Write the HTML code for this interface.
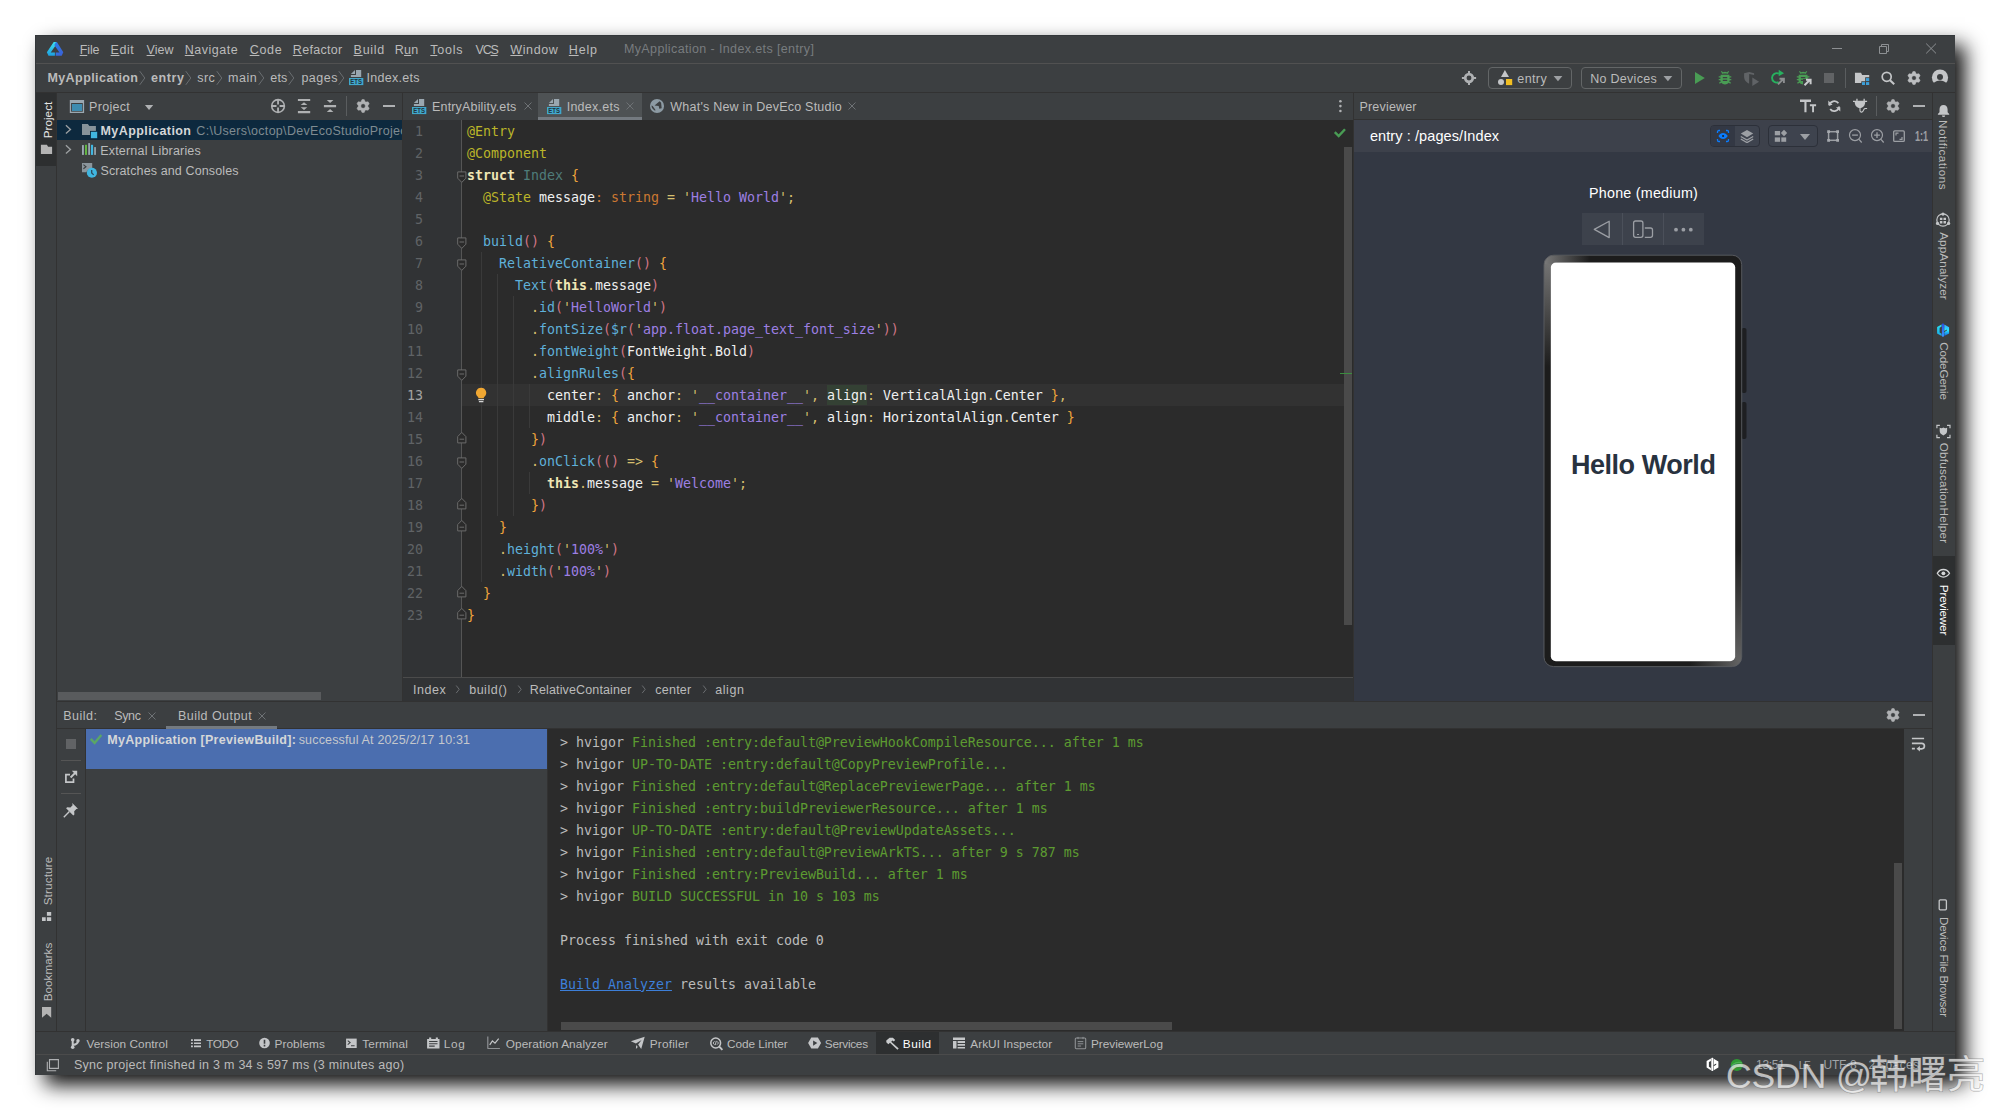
<!DOCTYPE html><html><head><meta charset="utf-8"><title>MyApplication - Index.ets [entry]</title><style>
html,body{margin:0;padding:0;}
body{width:1990px;height:1110px;background:#fff;position:relative;overflow:hidden;font-family:"Liberation Sans",sans-serif;font-size:13px;color:#bbb;}
div,span,svg,pre{position:absolute;white-space:pre;margin:0;}
b{font-weight:bold}

pre{font-family:"DejaVu Sans Mono","Liberation Mono",monospace;font-size:13.29px;height:22px;line-height:22px;color:#f0f0f0;}
pre i{font-style:normal}
.a{color:#bbb529}.k{color:#efe6b5;font-weight:bold}.t{color:#4f7c7a}.o{color:#f0a53c}.w{color:#f0f0f0}
.s{color:#9d7fe3}.y{color:#d6bf6e}.f{color:#5fb0da}.p{color:#d17686}.c{color:#cc7832}
.g{color:#5d9b31}.l{color:#bbbbbb}.u{color:#3d7fd9;text-decoration:underline}
.n{color:#606366;text-align:right;width:30px}
</style></head><body>
<div style="left:35px;top:35px;width:1920px;height:1040px;background:#3c3f41;box-shadow:10px 10px 19px rgba(0,0,0,.94);"></div>
<div style="left:35px;top:35px;width:1920px;height:1px;background:#33373a;"></div>
<div style="left:35px;top:63px;width:1920px;height:1px;background:#515151;"></div>
<div style="left:35px;top:92px;width:1920px;height:1px;background:#323232;"></div>
<div style="left:35px;top:93px;width:21px;height:939px;background:#3c3f41;"></div>
<div style="left:56px;top:93px;width:1px;height:939px;background:#323232;"></div>
<div style="left:35px;top:93px;width:21px;height:73px;background:#2d2f30;"></div>
<div style="left:402px;top:93px;width:1px;height:609px;background:#323232;"></div>
<div style="left:1353px;top:93px;width:1px;height:609px;background:#323232;"></div>
<div style="left:1932px;top:93px;width:1px;height:939px;background:#323232;"></div>
<div style="left:1933px;top:556px;width:22px;height:89px;background:#2d2f30;"></div>
<div style="left:57px;top:120px;width:345px;height:20px;background:#0d293e;"></div>
<div style="left:58px;top:692px;width:263px;height:8px;background:#595b5d;"></div>
<div style="left:403px;top:93px;width:950px;height:27px;background:#3c3f41;"></div>
<div style="left:538px;top:93px;width:104px;height:27px;background:#4e5254;"></div>
<div style="left:538px;top:117px;width:104px;height:3px;background:#747a80;"></div>
<div style="left:403px;top:120px;width:950px;height:557px;background:#2b2b2b;"></div>
<div style="left:403px;top:120px;width:58px;height:557px;background:#313335;"></div>
<div style="left:461px;top:120px;width:1px;height:557px;background:#555555;"></div>
<div style="left:462px;top:384px;width:882px;height:22px;background:#323232;"></div>
<div style="left:403px;top:677px;width:950px;height:1px;background:#4b4b4b;"></div>
<div style="left:403px;top:678px;width:950px;height:23px;background:#313335;"></div>
<div style="left:1344px;top:147px;width:8px;height:478px;background:#4a4a4a;"></div>
<div style="left:1340px;top:373px;width:12px;height:1px;background:#3b8d3f;"></div>
<div style="left:1354px;top:93px;width:578px;height:26px;background:#3c3f41;"></div>
<div style="left:1354px;top:119px;width:578px;height:1px;background:#323232;"></div>
<div style="left:1354px;top:120px;width:578px;height:32px;background:#3d414b;"></div>
<div style="left:1354px;top:152px;width:578px;height:549px;background:#333843;"></div>
<div style="left:57px;top:701px;width:1875px;height:1px;background:#323232;"></div>
<div style="left:57px;top:702px;width:1875px;height:27px;background:#3c3f41;"></div>
<div style="left:57px;top:728px;width:1875px;height:1px;background:#323232;"></div>
<div style="left:166px;top:726px;width:111px;height:3px;background:#747a80;"></div>
<div style="left:85px;top:729px;width:1px;height:303px;background:#323232;"></div>
<div style="left:86px;top:729px;width:461px;height:40px;background:#4b6eaf;"></div>
<div style="left:547px;top:729px;width:1px;height:303px;background:#323232;"></div>
<div style="left:548px;top:729px;width:1356px;height:303px;background:#2b2b2b;"></div>
<div style="left:1904px;top:729px;width:28px;height:303px;background:#3c3f41;"></div>
<div style="left:561px;top:1022px;width:611px;height:8px;background:#4a4a4a;"></div>
<div style="left:1894px;top:863px;width:8px;height:166px;background:#4a4a4a;"></div>
<div style="left:61px;top:760px;width:20px;height:1px;background:#555555;"></div>
<div style="left:61px;top:793px;width:20px;height:1px;background:#555555;"></div>
<div style="left:35px;top:1031px;width:1920px;height:1px;background:#323232;"></div>
<div style="left:35px;top:1032px;width:1920px;height:22px;background:#3c3f41;"></div>
<div style="left:876px;top:1032px;width:63px;height:22px;background:#2d2f30;"></div>
<div style="left:35px;top:1054px;width:1920px;height:1px;background:#4b4b4b;"></div>
<div style="left:35px;top:1055px;width:1920px;height:20px;background:#3c3f41;"></div>
<div style="left:35px;top:35px;width:1px;height:1040px;background:#33373a;"></div>
<svg style="left:1540px;top:250px;" width="212" height="424" viewBox="0 0 212 424">
<defs>
<linearGradient id="pgv" x1="0" y1="0" x2="0" y2="1"><stop offset="0" stop-color="#7a7a7a"/><stop offset="1" stop-color="#1c1c1c"/></linearGradient>
<linearGradient id="pgh" x1="0" y1="0" x2="1" y2="0"><stop offset="0" stop-color="#7a7a7a"/><stop offset="1" stop-color="#1c1c1c"/></linearGradient>
<linearGradient id="pgv2" x1="0" y1="0" x2="0" y2="1"><stop offset="0" stop-color="#1c1c1c"/><stop offset="1" stop-color="#666666"/></linearGradient>
<linearGradient id="pgh2" x1="0" y1="0" x2="1" y2="0"><stop offset="0" stop-color="#1c1c1c"/><stop offset="1" stop-color="#666666"/></linearGradient>
<clipPath id="ring"><path clip-rule="evenodd" d="M13.5 5.200h178.700a9.500 9.500 0 0 1 9.500 9.500v392.400a9.500 9.500 0 0 1-9.500 9.500H13.500a9.500 9.500 0 0 1-9.500-9.500V14.700a9.500 9.500 0 0 1 9.500-9.500zM15.800 12.500a5 5 0 0 0-5 5v388.800a5 5 0 0 0 5 5h174.400a5 5 0 0 0 5-5V17.500a5 5 0 0 0-5-5z"/></clipPath>
</defs>
<rect x="201.500" y="78" width="5" height="65" rx="2" fill="#1e1f22"/>
<rect x="201.500" y="152" width="5" height="37" rx="2" fill="#1e1f22"/>
<rect x="4" y="5.200" width="197.700" height="411.400" rx="9.500" fill="#1c1c1c"/>
<g clip-path="url(#ring)">
<rect x="4" y="5" width="8" height="112" fill="url(#pgv)"/>
<rect x="4" y="5" width="46" height="9" fill="url(#pgh)"/>
<rect x="194" y="300" width="8" height="117" fill="url(#pgv2)"/>
<rect x="150" y="410" width="52" height="7" fill="url(#pgh2)"/>
</g>
<rect x="4" y="5.200" width="197.700" height="411.400" rx="9.500" fill="none" stroke="#5b5e62" stroke-width=".9"/>
<rect x="10.800" y="12.500" width="184.400" height="398.800" rx="5" fill="#ffffff"/>
</svg>
<div style="left:1582px;top:213px;width:122px;height:32px;background:#3d424c;"></div>
<div style="left:1622px;top:213px;width:1px;height:32px;background:#4b505a;"></div>
<div style="left:1663px;top:213px;width:1px;height:32px;background:#4b505a;"></div>
<svg style="left:1582px;top:213px;" width="122" height="32" viewBox="0 0 122 32">
<path d="M27.200 8.300V24.600L12.300 16.400z" fill="none" stroke="#9b9ea4" stroke-width="1.300" stroke-linejoin="round"/>
<rect x="51.600" y="8" width="9.300" height="16.300" rx="2" fill="none" stroke="#9b9ea4" stroke-width="1.300"/>
<path d="M55 21.500h2" stroke="#9b9ea4" stroke-width="1"/>
<path d="M62.800 15h5.700a2 2 0 0 1 2 2v5.300a2 2 0 0 1-2 2h-5.700" fill="none" stroke="#9b9ea4" stroke-width="1.300"/>
<circle cx="94" cy="16.700" r="1.900" fill="#9b9ea4"/><circle cx="101.400" cy="16.700" r="1.900" fill="#9b9ea4"/><circle cx="108.800" cy="16.700" r="1.900" fill="#9b9ea4"/>
</svg>
<svg style="left:46px;top:41px;" width="19" height="16" viewBox="0 0 19 16">
<defs><linearGradient id="lg1" x1="0" y1="0" x2="0" y2="1"><stop offset="0" stop-color="#3fe0ee"/><stop offset="1" stop-color="#1c9fe0"/></linearGradient>
<linearGradient id="lg2" x1="0" y1="0" x2="1" y2="1"><stop offset="0" stop-color="#2b7fe8"/><stop offset="1" stop-color="#3b5fd6"/></linearGradient></defs>
<path d="M7.700 1H10.900L9.100 5.300L4.700 11.600H8.900V14.700H2.500L.850 11.300Z" fill="url(#lg1)"/>
<path d="M10.900 1L17.300 11.300L15.700 14.700H9.700V11.600H13.500L9.100 5.300L8.300 4L10 1Z" fill="url(#lg2)"/>
</svg>
<svg style="left:1826px;top:40px;" width="120" height="18" viewBox="0 0 120 18">
<path d="M6 8.500h10" stroke="#8d9093" stroke-width="1"/>
<path d="M53.500 6.500h7v7h-7zM55.500 6.500v-2h7v7h-2" fill="none" stroke="#8d9093" stroke-width="1"/>
<path d="M100.200 3.600l9.800 9.800M110 3.600l-9.800 9.800" stroke="#8d9093" stroke-width="1"/>
</svg>
<svg style="left:138.8px;top:70px;" width="8" height="16" viewBox="0 0 8 16"><path d="M.800 1.200L5.800 8L.800 14.800" fill="none" stroke="#6a6e71" stroke-width="1"/></svg>
<svg style="left:184.8px;top:70px;" width="8" height="16" viewBox="0 0 8 16"><path d="M.800 1.200L5.800 8L.800 14.800" fill="none" stroke="#6a6e71" stroke-width="1"/></svg>
<svg style="left:215.5px;top:70px;" width="8" height="16" viewBox="0 0 8 16"><path d="M.800 1.200L5.800 8L.800 14.800" fill="none" stroke="#6a6e71" stroke-width="1"/></svg>
<svg style="left:257.5px;top:70px;" width="8" height="16" viewBox="0 0 8 16"><path d="M.800 1.200L5.800 8L.800 14.800" fill="none" stroke="#6a6e71" stroke-width="1"/></svg>
<svg style="left:288.3px;top:70px;" width="8" height="16" viewBox="0 0 8 16"><path d="M.800 1.200L5.800 8L.800 14.800" fill="none" stroke="#6a6e71" stroke-width="1"/></svg>
<svg style="left:338px;top:70px;" width="8" height="16" viewBox="0 0 8 16"><path d="M.800 1.200L5.800 8L.800 14.800" fill="none" stroke="#6a6e71" stroke-width="1"/></svg>
<svg style="left:348px;top:69px;" width="17" height="18" viewBox="0 0 17 18">
<path d="M2.900 5L7 .900V5zM8 .900h5.200V8H2.900V6H8z" fill="#9aa7b0"/>
<rect x="1" y="9" width="14.300" height="7.100" fill="#40a8cc"/>
<text x="8.150" y="15.300" font-family="Liberation Sans,sans-serif" font-weight="bold" font-size="6.800" text-anchor="middle" fill="#22313a" textLength="11.600" lengthAdjust="spacingAndGlyphs">ETS</text>
</svg>
<svg style="left:410.9px;top:98px;" width="17" height="18" viewBox="0 0 17 18">
<path d="M2.900 5L7 .900V5zM8 .900h5.200V8H2.900V6H8z" fill="#9aa7b0"/>
<rect x="1" y="9" width="14.300" height="7.100" fill="#40a8cc"/>
<text x="8.150" y="15.300" font-family="Liberation Sans,sans-serif" font-weight="bold" font-size="6.800" text-anchor="middle" fill="#22313a" textLength="11.600" lengthAdjust="spacingAndGlyphs">ETS</text>
</svg>
<svg style="left:545.9px;top:98px;" width="17" height="18" viewBox="0 0 17 18">
<path d="M2.900 5L7 .900V5zM8 .900h5.200V8H2.900V6H8z" fill="#9aa7b0"/>
<rect x="1" y="9" width="14.300" height="7.100" fill="#40a8cc"/>
<text x="8.150" y="15.300" font-family="Liberation Sans,sans-serif" font-weight="bold" font-size="6.800" text-anchor="middle" fill="#22313a" textLength="11.600" lengthAdjust="spacingAndGlyphs">ETS</text>
</svg>
<svg style="left:1460px;top:69px;" width="18" height="18" viewBox="0 0 18 18">
<circle cx="9" cy="9" r="3.800" fill="none" stroke="#afb1b3" stroke-width="2.700"/>
<path d="M9 1.900v3M9 13.100v3M1.900 9h3M13.100 9h3" stroke="#afb1b3" stroke-width="2"/>
</svg>
<div style="left:1488px;top:67px;width:84px;height:22px;border:1px solid #636667;border-radius:4px;box-sizing:border-box"></div>
<div style="left:1581px;top:67px;width:101px;height:22px;border:1px solid #636667;border-radius:4px;box-sizing:border-box"></div>
<svg style="left:1496px;top:68px;" width="20" height="20" viewBox="0 0 20 20">
<path d="M8.900 2L13 9H5z" fill="#c4c6c8"/><circle cx="5" cy="14.100" r="3" fill="#c4c6c8"/><rect x="10" y="11" width="6.200" height="6.100" fill="#f2bf22"/>
</svg>
<svg style="left:1552px;top:74px;" width="12" height="9" viewBox="0 0 12 9"><path d="M1.600 1.900h8.800L6 7.200z" fill="#9da0a3"/></svg>
<svg style="left:1662px;top:74px;" width="12" height="9" viewBox="0 0 12 9"><path d="M1.500 1.900h8.800L5.900 7.200z" fill="#9da0a3"/></svg>
<svg style="left:1692px;top:69px;" width="16" height="18" viewBox="0 0 16 18"><path d="M3 3.100L12.800 9.100L3 15.100z" fill="#499c54"/></svg>
<svg style="left:1716px;top:69px;" width="18" height="18" viewBox="0 0 18 18"><path d="M5.6 4.600a4.100 4.100 0 0 1 6.800 0zM4.6 5.800h8.800v1.400h1.900v1.300h-1.700v1.500h1.700v1.300h-1.700c0 .5-.1 1-.3 1.400l1.700 .9-.6 1.100-1.800-.9c-.9 1.100-2.200 1.600-3.600 1.600s-2.700-.5-3.600-1.600l-1.800 .9-.6-1.100 1.700-.9c-.2-.4-.3-.9-.3-1.400h-1.700v-1.300h1.700v-1.500h-1.700v-1.300h1.900z" fill="#499c54"/>
<path d="M5.3 2.300l1.800 2M12.7 2.300l-1.800 2" stroke="#499c54" stroke-width="1.200"/>
<path d="M6.8 8.600h4.400M6.8 11.300h4.400" stroke="#3c3f41" stroke-width="1.300"/></svg>
<svg style="left:1742px;top:69px;" width="20" height="19" viewBox="0 0 20 19">
<path d="M2.100 4.300L7.200 3.100l4.900 1.200v1.600l-4.900-1-.100 9.900C4.300 13.400 2.100 11 2.100 8z" fill="#606366"/>
<path d="M10.300 8.500L17.100 12.800L10.300 17z" fill="#606366"/>
</svg>
<svg style="left:1767px;top:68px;" width="20" height="19" viewBox="0 0 20 19">
<path d="M11.900 5.700A4.700 4.700 0 1 0 11.600 14.200" fill="none" stroke="#27b15f" stroke-width="1.900"/>
<path d="M11.700 1.700L17 5.300L11.700 8.300z" fill="#27b15f"/>
<path d="M11 16.300l4.800-4.800M12.500 10.700h4.400v4.400" fill="none" stroke="#8c8e90" stroke-width="1.900"/>
</svg>
<svg style="left:1794px;top:69px;" width="20" height="19" viewBox="0 0 20 19"><path d="M5.7 4.600a4.100 4.100 0 0 1 6.800 0zM4.7 5.800h8.800v1.400h1.900v1.300h-1.700v1.500h1.700v1.300h-1.700c0 .5-.1 1-.3 1.400l1.700 .9-.6 1.100-1.800-.9c-.9 1.100-2.200 1.600-3.600 1.600s-2.700-.5-3.600-1.600l-1.800 .9-.6-1.100 1.700-.9c-.2-.4-.3-.9-.3-1.400h-1.700v-1.300h1.700v-1.500h-1.700v-1.300h1.900z" fill="#499c54"/>
<path d="M5.4 2.300l1.800 2M12.8 2.300l-1.800 2" stroke="#499c54" stroke-width="1.200"/>
<path d="M6.9 8.600h4.400M6.9 11.300h4.400" stroke="#3c3f41" stroke-width="1.300"/>
<path d="M9 10h10v9H9z" fill="#3c3f41"/>
<path d="M10.500 16.300l5-5M12 10.700h4.600v4.600" fill="none" stroke="#c9cbcd" stroke-width="2"/>
</svg>
<div style="left:1824px;top:73px;width:10.3px;height:10px;background:#616365;"></div>
<div style="left:1845px;top:68px;width:1px;height:20px;background:#5a5d5f;"></div>
<svg style="left:1853px;top:71px;" width="18" height="16" viewBox="0 0 18 16">
<path d="M1.950 1.850h6.100l1.100 2.200h7.050v2.200h-4v4h-3.900v1.800H1.950z" fill="#c4c6c8"/>
<rect x="13" y="7.100" width="3.200" height="3" fill="#3d9fd8"/><rect x="9" y="11.100" width="3" height="2.900" fill="#3d9fd8"/><rect x="13" y="11.100" width="3.200" height="2.900" fill="#3d9fd8"/>
</svg>
<svg style="left:1879px;top:69px;" width="18" height="18" viewBox="0 0 18 18">
<circle cx="7.700" cy="7.800" r="4.500" fill="none" stroke="#c4c6c8" stroke-width="1.700"/>
<path d="M11 11.200l4.200 4.100" stroke="#c4c6c8" stroke-width="2.100"/>
</svg>
<svg style="left:1905px;top:69px;" width="18" height="18" viewBox="0 0 18 18"><path fill-rule="evenodd" fill="#bcbec0" stroke="#bcbec0" stroke-width=".5" stroke-linejoin="round" d="M6.93 4.72L7.90 2.59L10.10 2.59L11.07 4.72L11.67 5.07L14.00 4.84L15.10 6.75L13.74 8.65L13.74 9.35L15.10 11.25L14.00 13.16L11.67 12.93L11.07 13.28L10.10 15.41L7.90 15.41L6.93 13.28L6.33 12.93L4.00 13.16L2.90 11.25L4.26 9.35L4.26 8.65L2.90 6.75L4.00 4.84L6.33 5.07ZM6.70 9.00a2.3 2.3 0 1 0 4.6 0a2.3 2.3 0 1 0 -4.6 0Z"/></svg>
<svg style="left:1930px;top:68px;" width="20" height="20" viewBox="0 0 20 20">
<defs><clipPath id="avc"><circle cx="10" cy="9.500" r="8.100"/></clipPath></defs>
<circle cx="10" cy="9.500" r="8.100" fill="#c4c6c8"/>
<circle cx="10" cy="9" r="3" fill="#3c3f41"/>
<ellipse cx="10" cy="18.600" rx="7.750" ry="6" fill="#3c3f41"/>
</svg>
<svg style="left:68px;top:98px;" width="18" height="17" viewBox="0 0 18 17">
<rect x="1.800" y="2" width="14.300" height="13" fill="#9aa7b0"/>
<rect x="3.100" y="5" width="11.700" height="8.700" fill="#3c3f41"/>
<rect x="4" y="6" width="10.100" height="7" fill="#3e8cb0"/>
</svg>
<svg style="left:143px;top:103px;" width="12" height="9" viewBox="0 0 12 9"><path d="M1.900 2h8.300L6.050 7z" fill="#afb1b3"/></svg>
<svg style="left:269px;top:97px;" width="18" height="18" viewBox="0 0 18 18">
<circle cx="9.050" cy="9" r="6.350" fill="none" stroke="#afb1b3" stroke-width="1.600"/>
<path d="M9.050 2.500v4.900M9.050 10.600v4.900M2.600 9h4.900M10.600 9h4.900" stroke="#afb1b3" stroke-width="1.800"/>
</svg>
<svg style="left:296px;top:97px;" width="16" height="18" viewBox="0 0 16 18">
<path d="M1.900 1.900h12.300v2.200H1.900zM1.900 14h12.300v2.200H1.900zM8 5.300l3.300 2.800H4.700zM8 13l3.300-2.800H4.700z" fill="#afb1b3"/>
</svg>
<svg style="left:322px;top:97px;" width="16" height="18" viewBox="0 0 16 18">
<path d="M1.900 7.950h12.200v2.250H1.900zM8.100 6l3.300-3H4.800zM8.100 12.100l3.300 3H4.800z" fill="#afb1b3"/>
</svg>
<div style="left:346px;top:96px;width:1px;height:20px;background:#5a5d5f;"></div>
<svg style="left:354px;top:97px;" width="18" height="18" viewBox="0 0 18 18"><path fill-rule="evenodd" fill="#afb1b3" stroke="#afb1b3" stroke-width=".5" stroke-linejoin="round" d="M7.03 4.72L8.00 2.59L10.20 2.59L11.17 4.72L11.77 5.07L14.10 4.84L15.20 6.75L13.84 8.65L13.84 9.35L15.20 11.25L14.10 13.16L11.77 12.93L11.17 13.28L10.20 15.41L8.00 15.41L7.03 13.28L6.43 12.93L4.10 13.16L3.00 11.25L4.36 9.35L4.36 8.65L3.00 6.75L4.10 4.84L6.43 5.07ZM6.80 9.00a2.3 2.3 0 1 0 4.6 0a2.3 2.3 0 1 0 -4.6 0Z"/></svg>
<div style="left:383px;top:104.8px;width:12.2px;height:2.4px;background:#afb1b3;"></div>
<svg style="left:39px;top:143px;" width="15" height="13" viewBox="0 0 15 13"><path d="M1.900 1.800h6l1.200 2h4V11H1.900z" fill="#b4b4b4"/></svg>
<svg style="left:63px;top:123px;" width="10" height="14" viewBox="0 0 10 14"><path d="M2.900 2.200L7.500 6.400L2.900 10.600" fill="none" stroke="#9da0a2" stroke-width="1.300"/></svg>
<svg style="left:63px;top:143px;" width="10" height="14" viewBox="0 0 10 14"><path d="M2.900 2.200L7.500 6.400L2.900 10.600" fill="none" stroke="#9da0a2" stroke-width="1.300"/></svg>
<svg style="left:80px;top:122px;" width="19" height="18" viewBox="0 0 19 18">
<path d="M2 2h5.900l1.500 2H15.900v9H2z" fill="#87939a"/>
<rect x="10" y="8.900" width="8.200" height="8.200" fill="#0d293e"/>
<rect x="10.900" y="9.800" width="6.300" height="6.400" fill="#40b6e0"/>
</svg>
<svg style="left:80px;top:141px;" width="18" height="16" viewBox="0 0 18 16">
<rect x="2" y="4.100" width="1.900" height="9.800" fill="#9aa7b0"/><rect x="5" y="3.800" width="2" height="10.100" fill="#62b543"/>
<rect x="8.200" y="2.100" width="1.900" height="11.800" fill="#9aa7b0"/><rect x="11" y="3.800" width="2.100" height="10.100" fill="#40b6e0"/>
<rect x="14.200" y="6.100" width="1.700" height="7.800" fill="#9aa7b0"/>
</svg>
<svg style="left:80px;top:161px;" width="19" height="19" viewBox="0 0 19 19">
<path d="M2 2h10.200v6.500H8.500L6.200 11.200H2z" fill="#8a959c"/>
<path d="M3.400 3.600l2.600 2.100-2.600 2.100" fill="none" stroke="#3c3f41" stroke-width="1.100"/>
<circle cx="11.900" cy="11.750" r="5.100" fill="#40b6e0"/>
<path d="M11.700 8.900v3.100l2 1.900" fill="none" stroke="#2b4a5c" stroke-width="1.300"/>
</svg>
<svg style="left:522.5px;top:101.2px;" width="10" height="10" viewBox="0 0 10 10"><path d="M1.500 1.500l7 7M8.500 1.500l-7 7" stroke="#6e7275" stroke-width="1"/></svg>
<svg style="left:625.2px;top:101.2px;" width="10" height="10" viewBox="0 0 10 10"><path d="M1.500 1.500l7 7M8.500 1.500l-7 7" stroke="#6e7275" stroke-width="1"/></svg>
<svg style="left:847px;top:101.2px;" width="10" height="10" viewBox="0 0 10 10"><path d="M1.500 1.500l7 7M8.500 1.500l-7 7" stroke="#6e7275" stroke-width="1"/></svg>
<svg style="left:146.5px;top:711.3px;" width="10" height="10" viewBox="0 0 10 10"><path d="M1.500 1.500l7 7M8.500 1.500l-7 7" stroke="#6e7275" stroke-width="1"/></svg>
<svg style="left:257.3px;top:711.3px;" width="10" height="10" viewBox="0 0 10 10"><path d="M1.500 1.500l7 7M8.500 1.500l-7 7" stroke="#6e7275" stroke-width="1"/></svg>
<svg style="left:649px;top:98px;" width="17" height="17" viewBox="0 0 17 17">
<circle cx="8.020" cy="8.050" r="7.050" fill="#8c9aa3"/>
<path d="M10.600 3.200L12.100 4.700L12.700 10.200L10.300 10.800L9.700 8.100L5.500 7.500L7.300 5.900L9.100 4.400zM2.400 7.400L3.700 8.100L6.700 12.300L5.500 12.600L3 9.900z" fill="#3c3f41"/>
</svg>
<svg style="left:1336px;top:98px;" width="8" height="16" viewBox="0 0 8 16"><circle cx="4.400" cy="3.200" r="1.300" fill="#afb1b3"/><circle cx="4.400" cy="8.100" r="1.300" fill="#afb1b3"/><circle cx="4.400" cy="13" r="1.300" fill="#afb1b3"/></svg>
<svg style="left:455.3px;top:684px;" width="6" height="11" viewBox="0 0 6 11"><path d="M1.200 1.500L4.200 5.300L1.200 9.100" fill="none" stroke="#6a6d70" stroke-width="1"/></svg>
<svg style="left:516.6px;top:684px;" width="6" height="11" viewBox="0 0 6 11"><path d="M1.200 1.500L4.200 5.300L1.200 9.100" fill="none" stroke="#6a6d70" stroke-width="1"/></svg>
<svg style="left:641px;top:684px;" width="6" height="11" viewBox="0 0 6 11"><path d="M1.200 1.500L4.200 5.300L1.200 9.100" fill="none" stroke="#6a6d70" stroke-width="1"/></svg>
<svg style="left:701.5px;top:684px;" width="6" height="11" viewBox="0 0 6 11"><path d="M1.200 1.500L4.200 5.300L1.200 9.100" fill="none" stroke="#6a6d70" stroke-width="1"/></svg>
<svg style="left:456px;top:171px;" width="11" height="13" viewBox="0 0 11 13"><path d="M1.700 .900h8.200v6.300L5.800 11.400L1.700 7.200z" fill="#2b2b2b" stroke="#6c6c6c" stroke-width="1"/><path d="M3.500 5h4.600" stroke="#6c6c6c" stroke-width="1"/></svg>
<svg style="left:456px;top:237px;" width="11" height="13" viewBox="0 0 11 13"><path d="M1.700 .900h8.200v6.300L5.800 11.400L1.700 7.200z" fill="#2b2b2b" stroke="#6c6c6c" stroke-width="1"/><path d="M3.500 5h4.600" stroke="#6c6c6c" stroke-width="1"/></svg>
<svg style="left:456px;top:259px;" width="11" height="13" viewBox="0 0 11 13"><path d="M1.700 .900h8.200v6.300L5.800 11.400L1.700 7.200z" fill="#2b2b2b" stroke="#6c6c6c" stroke-width="1"/><path d="M3.500 5h4.600" stroke="#6c6c6c" stroke-width="1"/></svg>
<svg style="left:456px;top:369px;" width="11" height="13" viewBox="0 0 11 13"><path d="M1.700 .900h8.200v6.300L5.800 11.400L1.700 7.200z" fill="#2b2b2b" stroke="#6c6c6c" stroke-width="1"/><path d="M3.500 5h4.600" stroke="#6c6c6c" stroke-width="1"/></svg>
<svg style="left:456px;top:457px;" width="11" height="13" viewBox="0 0 11 13"><path d="M1.700 .900h8.200v6.300L5.800 11.400L1.700 7.200z" fill="#2b2b2b" stroke="#6c6c6c" stroke-width="1"/><path d="M3.500 5h4.600" stroke="#6c6c6c" stroke-width="1"/></svg>
<svg style="left:456px;top:431px;" width="11" height="13" viewBox="0 0 11 13"><path d="M1.700 11.900h8.200V5.600L5.800 1.400L1.700 5.600z" fill="#2b2b2b" stroke="#6c6c6c" stroke-width="1"/><path d="M3.500 8.200h4.600" stroke="#6c6c6c" stroke-width="1"/></svg>
<svg style="left:456px;top:497px;" width="11" height="13" viewBox="0 0 11 13"><path d="M1.700 11.900h8.200V5.600L5.800 1.400L1.700 5.600z" fill="#2b2b2b" stroke="#6c6c6c" stroke-width="1"/><path d="M3.500 8.200h4.600" stroke="#6c6c6c" stroke-width="1"/></svg>
<svg style="left:456px;top:519px;" width="11" height="13" viewBox="0 0 11 13"><path d="M1.700 11.900h8.200V5.600L5.800 1.400L1.700 5.600z" fill="#2b2b2b" stroke="#6c6c6c" stroke-width="1"/><path d="M3.500 8.200h4.600" stroke="#6c6c6c" stroke-width="1"/></svg>
<svg style="left:456px;top:585px;" width="11" height="13" viewBox="0 0 11 13"><path d="M1.700 11.900h8.200V5.600L5.800 1.400L1.700 5.600z" fill="#2b2b2b" stroke="#6c6c6c" stroke-width="1"/><path d="M3.500 8.200h4.600" stroke="#6c6c6c" stroke-width="1"/></svg>
<svg style="left:456px;top:607px;" width="11" height="13" viewBox="0 0 11 13"><path d="M1.700 11.900h8.200V5.600L5.800 1.400L1.700 5.600z" fill="#2b2b2b" stroke="#6c6c6c" stroke-width="1"/><path d="M3.500 8.200h4.600" stroke="#6c6c6c" stroke-width="1"/></svg>
<svg style="left:1332px;top:126px;" width="16" height="14" viewBox="0 0 16 14"><path d="M2.800 6.200l3.900 3.900 6.300-6.900" fill="none" stroke="#499c54" stroke-width="2.400"/></svg>
<svg style="left:1798px;top:97px;" width="20" height="18" viewBox="0 0 20 18"><path d="M2 2.400h11v2.500H8.500v10.400H6.400V4.900H2zM11.900 7.200h6.200v2H16v6.100h-1.900V9.200h-2.200z" fill="#c4c6c8"/></svg>
<svg style="left:1826px;top:97px;" width="17" height="18" viewBox="0 0 17 18">
<path d="M3.500 8.800A4.900 4.900 0 0 1 12.400 6.300M13.100 9.500A4.900 4.900 0 0 1 4.200 12" fill="none" stroke="#c4c6c8" stroke-width="1.800"/>
<path d="M2.300 3.600v4.300h4.300zM14.300 14.500v-4.300H10z" fill="#c4c6c8"/>
</svg>
<svg style="left:1852px;top:97px;" width="17" height="18" viewBox="0 0 17 18"><path d="M1 3.800h14.100v1.300H1zM4.300 1.800h1.300v2.200H4.300zM11.500 1.800h1.300v2.200h-1.300zM2.700 5h10.500c0 3.300-2.100 6.100-5.200 6.100S2.700 8.300 2.700 5z" fill="#c4c6c8"/>
<path d="M8 11v2.500c0 1.900 2.300 2.200 3.100 .6l.9-1.800c.3-.6 .7-.8 1.300-.8h1.800" fill="none" stroke="#c4c6c8" stroke-width="1.100"/></svg>
<div style="left:1876px;top:96px;width:1px;height:20px;background:#5a5d5f;"></div>
<svg style="left:1884px;top:97px;" width="18" height="18" viewBox="0 0 18 18"><path fill-rule="evenodd" fill="#afb1b3" stroke="#afb1b3" stroke-width=".5" stroke-linejoin="round" d="M6.93 4.72L7.90 2.59L10.10 2.59L11.07 4.72L11.67 5.07L14.00 4.84L15.10 6.75L13.74 8.65L13.74 9.35L15.10 11.25L14.00 13.16L11.67 12.93L11.07 13.28L10.10 15.41L7.90 15.41L6.93 13.28L6.33 12.93L4.00 13.16L2.90 11.25L4.26 9.35L4.26 8.65L2.90 6.75L4.00 4.84L6.33 5.07ZM6.70 9.00a2.3 2.3 0 1 0 4.6 0a2.3 2.3 0 1 0 -4.6 0Z"/></svg>
<div style="left:1912.9px;top:104.8px;width:12.3px;height:2.4px;background:#afb1b3;"></div>
<div style="left:1710px;top:125px;width:50px;height:22px;border:1px solid #2c3039;border-radius:4px;box-sizing:border-box;background:#3e434e;overflow:hidden"><div style="left:0;top:0;width:24px;height:20px;background:#333844"></div></div>
<div style="left:1768px;top:125px;width:50px;height:22px;border:1px solid #2c3039;border-radius:4px;box-sizing:border-box;background:#3e434e"></div>
<svg style="left:1716px;top:129px;" width="14" height="14" viewBox="0 0 14 14">
<path d="M1.500 4V2.800a1.300 1.300 0 0 1 1.300-1.300H4M10 1.500h1.200a1.300 1.300 0 0 1 1.300 1.300V4M12.500 10v1.200a1.300 1.300 0 0 1-1.300 1.300H10M4 12.500H2.800a1.300 1.300 0 0 1-1.300-1.300V10" fill="none" stroke="#0a7cff" stroke-width="1.300"/>
<path d="M2.400 7c1.200-2 2.900-3 4.700-3s3.500 1 4.700 3c-1.200 2-2.900 3-4.700 3s-3.500-1-4.700-3z" fill="#0a7cff"/><circle cx="7.100" cy="7" r="1.100" fill="#1e2530"/>
</svg>
<svg style="left:1740px;top:129px;" width="14" height="14" viewBox="0 0 14 14">
<path d="M7 1l6.200 3.600L7 8.200.800 4.600z" fill="#9c9fa4"/>
<path d="M.800 7.500L7 11.100l6.200-3.600M.800 10L7 13.600l6.200-3.600" fill="none" stroke="#9c9fa4" stroke-width="1.300"/>
</svg>
<svg style="left:1774px;top:129px;" width="14" height="14" viewBox="0 0 14 14">
<rect x=".800" y="2" width="5.300" height="4.300" fill="#9c9fa4"/><rect x=".800" y="8.400" width="5.300" height="4.400" fill="#9c9fa4"/><rect x="7.300" y="8.400" width="4.900" height="4.400" fill="#9c9fa4"/>
<path d="M10 .800l3.200 3.200L10 7.200 6.800 4z" fill="#9c9fa4"/>
</svg>
<svg style="left:1799px;top:132px;" width="12" height="10" viewBox="0 0 12 10"><path d="M1 1.900h10L6 8z" fill="#9c9fa4"/></svg>
<svg style="left:1826px;top:129px;" width="15" height="14" viewBox="0 0 15 14">
<rect x="2.600" y="2.700" width="9" height="8.600" fill="none" stroke="#9c9fa4" stroke-width="1.500"/>
<path d="M1.200 1.300h2.800v2.800H1.200zM10.200 1.300h2.800v2.800h-2.800zM1.200 9.900h2.800v2.800H1.200zM10.200 9.900h2.800v2.800h-2.800z" fill="#a6a9ae"/>
</svg>
<svg style="left:1848px;top:128px;" width="15" height="16" viewBox="0 0 15 16"><circle cx="7" cy="7.100" r="5.500" fill="none" stroke="#9c9fa4" stroke-width="1.200"/><path d="M11 11.300l2.700 3.200" stroke="#9c9fa4" stroke-width="1.200"/><path d="M4.100 7.100h5.800" stroke="#9c9fa4" stroke-width="1.300"/></svg>
<svg style="left:1869.7px;top:128px;" width="15" height="16" viewBox="0 0 15 16"><circle cx="7" cy="7.100" r="5.500" fill="none" stroke="#9c9fa4" stroke-width="1.200"/><path d="M11 11.300l2.700 3.200" stroke="#9c9fa4" stroke-width="1.200"/><path d="M4.100 7.100h5.800M7 4.200v5.800" stroke="#9c9fa4" stroke-width="1.300"/></svg>
<svg style="left:1892px;top:129px;" width="14" height="14" viewBox="0 0 14 14">
<rect x="1.700" y="1.900" width="10.600" height="10.500" rx="1" fill="none" stroke="#9c9fa4" stroke-width="1.300"/>
<path d="M4 6.500V4.200h2.500M10 8v2.300H7.500" fill="none" stroke="#9c9fa4" stroke-width="1.200"/>
</svg>
<svg style="left:1884px;top:706px;" width="18" height="18" viewBox="0 0 18 18"><path fill-rule="evenodd" fill="#afb1b3" stroke="#afb1b3" stroke-width=".5" stroke-linejoin="round" d="M6.93 4.72L7.90 2.59L10.10 2.59L11.07 4.72L11.67 5.07L14.00 4.84L15.10 6.75L13.74 8.65L13.74 9.35L15.10 11.25L14.00 13.16L11.67 12.93L11.07 13.28L10.10 15.41L7.90 15.41L6.93 13.28L6.33 12.93L4.00 13.16L2.90 11.25L4.26 9.35L4.26 8.65L2.90 6.75L4.00 4.84L6.33 5.07ZM6.70 9.00a2.3 2.3 0 1 0 4.6 0a2.3 2.3 0 1 0 -4.6 0Z"/></svg>
<div style="left:1912.9px;top:713.7px;width:12.2px;height:2.5px;background:#afb1b3;"></div>
<svg style="left:1910px;top:736px;" width="17" height="17" viewBox="0 0 17 17">
<path d="M1.900 2.500h12.200M1.900 7.400h9.800a2.700 2.700 0 0 1 0 5.400h-2.900M1.900 12.700h3" fill="none" stroke="#c4c6c8" stroke-width="1.700"/>
<path d="M9.900 10l-3.400 2.800 3.400 2.800z" fill="#c4c6c8"/>
</svg>
<div style="left:65.9px;top:739px;width:10.2px;height:10px;background:#616365;"></div>
<svg style="left:63px;top:769px;" width="16" height="16" viewBox="0 0 16 16">
<path d="M7 5.600H2.900v7.600h7.600V9.400" fill="none" stroke="#c4c6c8" stroke-width="1.700"/>
<path d="M7.600 8.500l5.600-5.600" stroke="#c4c6c8" stroke-width="1.900"/><path d="M8.800 1.800h5.400v5.400z" fill="#c4c6c8"/>
</svg>
<svg style="left:62px;top:801px;" width="18" height="18" viewBox="0 0 18 18">
<path d="M10.200 1.900l5.800 5.800-1.600 .3-2.200 2.200 .2 3.200-1.100 1.100L4.100 7.300l1.100-1.100 3.200 .2 2.200-2.200z" fill="#c4c6c8"/>
<path d="M7.400 10.600L1.800 16.200" stroke="#c4c6c8" stroke-width="1.400"/>
</svg>
<svg style="left:89px;top:733px;" width="15" height="13" viewBox="0 0 15 13"><path d="M1.700 5.900l3.900 4 6.700-8" fill="none" stroke="#5aa765" stroke-width="2.400"/></svg>
<svg style="left:1936px;top:103px;" width="15" height="15" viewBox="0 0 15 15">
<path d="M7.500 1.900c2.600 0 4.100 2 4.100 4.600v2.700l1.600 1.700v.9H1.900v-.9l1.600-1.700V6.500c0-2.600 1.400-4.600 4-4.600zM5.900 12.600h3.300a1.650 1.500 0 0 1-3.300 0z" fill="#c4c6c8"/>
</svg>
<svg style="left:1935px;top:212px;" width="17" height="16" viewBox="0 0 17 16">
<circle cx="8" cy="8" r="6.200" fill="none" stroke="#c4c6c8" stroke-width="1.200"/>
<circle cx="8" cy="2.100" r="1.600" fill="#c4c6c8"/><circle cx="2.500" cy="11.400" r="1.600" fill="#c4c6c8"/><circle cx="13.600" cy="11.400" r="1.600" fill="#c4c6c8"/>
<path d="M4.900 5.700h2.500V8H4.900zM8.500 5.700H11V8H8.500zM4.900 9.100h2.500v2.300H4.900zM8.500 9.100H11v2.300H8.500z" fill="#c4c6c8"/>
</svg>
<svg style="left:1936px;top:322px;" width="15" height="16" viewBox="0 0 15 16"><defs><linearGradient id="cga" x1="0" y1="0" x2="0" y2="1"><stop offset="0" stop-color="#29e4f2"/><stop offset="1" stop-color="#18a6e6"/></linearGradient>
<linearGradient id="cgb" x1="0" y1="0" x2="0" y2="1"><stop offset="0" stop-color="#2a4fe0"/><stop offset="1" stop-color="#3b93ff"/></linearGradient>
<linearGradient id="cgc" x1="0" y1="0" x2="0" y2="1"><stop offset="0" stop-color="#38a2ff"/><stop offset=".5" stop-color="#28e6ff"/><stop offset="1" stop-color="#0f5ee0"/></linearGradient></defs>
<path d="M5.600 2.400L1.100 4.900v6.500L5.600 14v-2.200l-2-1.200V5.800l2-1.200z" fill="url(#cga)"/>
<rect x="5.900" y="1.400" width="2.100" height="13.400" rx=".8" fill="url(#cgb)"/>
<path d="M8.300 2.500l4.800 2.700v6.200l-4.800 2.700V10l2.600-1.400V7.400L8.300 8.900z" fill="url(#cgc)"/></svg>
<svg style="left:1935px;top:423px;" width="17" height="16" viewBox="0 0 17 16">
<path d="M1.900 5.200V2.300h3M12 2.300h3v2.900M15 11.700v2.900h-3M4.900 14.600h-3v-2.900" fill="none" stroke="#c4c6c8" stroke-width="1.200"/>
<path d="M4.700 4.800c1.400 .5 2.400 .5 3.700-.2 1.300 .7 2.300 .7 3.700 .2v3.300c0 2.100-1.600 3.500-3.700 4.300-2.100-.8-3.700-2.200-3.700-4.300z" fill="#c4c6c8"/>
</svg>
<svg style="left:1936px;top:567px;" width="15" height="12" viewBox="0 0 15 12">
<path d="M1.300 6.300C2.800 3.700 5 2.500 7.400 2.500s4.600 1.200 6.100 3.800c-1.500 2.600-3.700 3.800-6.100 3.800S2.800 8.900 1.300 6.300z" fill="none" stroke="#d5d7d8" stroke-width="1.300"/>
<circle cx="7.400" cy="6.300" r="1.900" fill="#d5d7d8"/>
</svg>
<svg style="left:1937px;top:898px;" width="12" height="14" viewBox="0 0 12 14"><rect x="2.200" y="1.900" width="7.200" height="9.900" rx="1" fill="none" stroke="#c4c6c8" stroke-width="1.300"/></svg>
<svg style="left:41px;top:911px;" width="12" height="11" viewBox="0 0 12 11"><path d="M5.900 1h4.300v3.800H5.900zM1 6.200h3.700v3.900H1zM5.900 6.200h4.300v3.900H5.900z" fill="#c4c6c8"/></svg>
<svg style="left:41px;top:1006px;" width="12" height="13" viewBox="0 0 12 13"><path d="M1 .900h9.200v10.900L5.600 7.700 1 11.800z" fill="#b4b4b4"/></svg>
<svg style="left:69px;top:1037px;" width="12" height="13" viewBox="0 0 12 13">
<circle cx="3.700" cy="2.800" r="1.800" fill="#c4c6c8"/><circle cx="3.700" cy="10.300" r="1.800" fill="#c4c6c8"/><circle cx="9" cy="3.800" r="1.700" fill="#c4c6c8"/>
<path d="M3.700 2.700v7.700M9 3.700c0 3-2.400 3.900-5.300 4.200" fill="none" stroke="#c4c6c8" stroke-width="2"/>
</svg>
<svg style="left:190px;top:1038px;" width="12" height="10" viewBox="0 0 12 10"><path d="M1 1.200h1.900v1.700H1zM4 1.200h7v1.700H4zM1 4.400h1.900v1.700H1zM4 4.400h7v1.700H4zM1 7.600h1.900v1.700H1zM4 7.600h7v1.700H4z" fill="#c4c6c8"/></svg>
<svg style="left:258px;top:1037px;" width="13" height="12" viewBox="0 0 13 12"><circle cx="6.500" cy="6" r="5.300" fill="#c4c6c8"/><path d="M5.700 2.700h1.600v4.100H5.700zM5.700 7.800h1.600v1.600H5.700z" fill="#3c3f41"/></svg>
<svg style="left:345px;top:1038px;" width="13" height="11" viewBox="0 0 13 11"><rect x="1.100" y=".600" width="10.600" height="9.400" fill="#c4c6c8"/><path d="M2.700 2.600l2.400 2-2.400 2M6 7.700h3.600" fill="none" stroke="#3c3f41" stroke-width="1.100"/></svg>
<svg style="left:426px;top:1037px;" width="15" height="13" viewBox="0 0 15 13"><path d="M1.100 1.900h2V.600h2.100v1.300h4.600V.600h2.100v1.300h1.600v9.700H1.100z" fill="#c4c6c8"/><path d="M3.100 4.500h8.400M3.100 6.800h8.400M3.100 9.100h5.600" stroke="#3c3f41" stroke-width="1.100"/></svg>
<svg style="left:486px;top:1036px;" width="15" height="14" viewBox="0 0 15 14"><path d="M1.800 .600v11.300a.6 .6 0 0 0 .6 .6h11.500" fill="none" stroke="#8e9194" stroke-width="1.200"/><path d="M3.700 8.900l2.700-4.100 2.600 2.300 3.700-4.500" fill="none" stroke="#c4c6c8" stroke-width="1.200"/></svg>
<svg style="left:630px;top:1036px;" width="16" height="14" viewBox="0 0 16 14"><path d="M.900 5.300L14.700 .700l-3.500 12.200-3.100-4.400L11.600 4 5.900 7.400zM6.200 8.900l1.600 2.200-1.900 1.800z" fill="#c4c6c8"/></svg>
<svg style="left:708px;top:1036px;" width="16" height="15" viewBox="0 0 16 15">
<circle cx="7.700" cy="7" r="4.900" fill="none" stroke="#c4c6c8" stroke-width="1.500"/><path d="M11.300 10.700l3.100 3.100" stroke="#c4c6c8" stroke-width="1.900"/>
<path d="M6.500 5.300L5 7l1.500 1.700M9 5.300L10.500 7 9 8.700M8.300 4.900L7.200 9.100" fill="none" stroke="#c4c6c8" stroke-width=".9"/>
</svg>
<svg style="left:807px;top:1037px;" width="15" height="13" viewBox="0 0 15 13"><path d="M4.300 .600h6.600l3.200 5.500-3.200 5.500H4.300L1.100 6.100z" fill="#c4c6c8"/><path d="M6.100 3.400l4.200 2.700-4.200 2.700z" fill="#3c3f41"/></svg>
<svg style="left:885px;top:1037px;" width="15" height="13" viewBox="0 0 15 13"><path d="M1.300 3.500L4.600 .800h3.300l2.300 2.200-1.400 1.400-1.300-.9-1.300 1.300 7.500 6.700-1.300 1.300L5 5.700 3.300 7.300 1.300 5.300z" fill="#c9cbcd"/></svg>
<svg style="left:952px;top:1037px;" width="14" height="12" viewBox="0 0 14 12"><path d="M1 .600h12v2.400H1zM1 4.100h3.500v7.500H1zM5.600 4.100H13v1.800H5.600zM5.600 7H13v1.800H5.600zM5.600 9.900H13v1.700H5.600z" fill="#c4c6c8"/></svg>
<svg style="left:1074px;top:1036px;" width="13" height="14" viewBox="0 0 13 14"><rect x="1.300" y="2" width="10.400" height="10.700" rx="1" fill="none" stroke="#8e9194" stroke-width="1.100"/><path d="M4 .900v2.200M9 .900v2.200M3.700 5.600h5.600M3.700 7.800h5.600M3.700 10h3.400" stroke="#8e9194" stroke-width="1"/></svg>
<svg style="left:46px;top:1058px;" width="14" height="14" viewBox="0 0 14 14"><path d="M3.500 1.600h8.900v8.800H3.500zM1.300 3.800v9h8.900" fill="none" stroke="#afb1b3" stroke-width="1.100"/></svg>
<svg style="left:1705px;top:1056px;" width="16" height="17" viewBox="0 0 16 17">
<path d="M5.900 2.600L1.600 5.100v6.500l4.300 2.600v-2.300l-2-1.100V6.100l2-1.200z" fill="#ffffff"/>
<rect x="6.300" y="1.700" width="2" height="13.300" rx=".7" fill="#ffffff"/>
<path d="M8.700 2.700l4.700 2.700v6.100l-4.700 2.700v-4l2.500-1.400V7.600L8.700 9z" fill="#ffffff"/>
</svg>
<svg style="left:1729px;top:1057px;" width="16" height="16" viewBox="0 0 16 16"><circle cx="7.800" cy="8" r="6.100" fill="#2f9a35"/><path d="M2.600 9.400c2-3.300 6.200-4.800 10.300-3.400" fill="none" stroke="#4db356" stroke-width="1.400"/></svg>
<span style="left:79.72px;top:39.5px;height:20px;line-height:20px;font-size:12.5px;color:#bbbbbb;letter-spacing:-0.112px;"><u>F</u>ile</span>
<span style="left:110.62px;top:39.5px;height:20px;line-height:20px;font-size:12.5px;color:#bbbbbb;letter-spacing:0.496px;"><u>E</u>dit</span>
<span style="left:146.60px;top:39.5px;height:20px;line-height:20px;font-size:12.5px;color:#bbbbbb;letter-spacing:0.051px;"><u>V</u>iew</span>
<span style="left:184.82px;top:39.5px;height:20px;line-height:20px;font-size:12.5px;color:#bbbbbb;letter-spacing:0.506px;"><u>N</u>avigate</span>
<span style="left:249.72px;top:39.5px;height:20px;line-height:20px;font-size:12.5px;color:#bbbbbb;letter-spacing:0.675px;"><u>C</u>ode</span>
<span style="left:292.82px;top:39.5px;height:20px;line-height:20px;font-size:12.5px;color:#bbbbbb;letter-spacing:0.294px;"><u>R</u>efactor</span>
<span style="left:353.62px;top:39.5px;height:20px;line-height:20px;font-size:12.5px;color:#bbbbbb;letter-spacing:0.667px;"><u>B</u>uild</span>
<span style="left:394.82px;top:39.5px;height:20px;line-height:20px;font-size:12.5px;color:#bbbbbb;letter-spacing:0.207px;">R<u>u</u>n</span>
<span style="left:430.30px;top:39.5px;height:20px;line-height:20px;font-size:12.5px;color:#bbbbbb;letter-spacing:0.751px;"><u>T</u>ools</span>
<span style="left:475.50px;top:39.5px;height:20px;line-height:20px;font-size:12.5px;color:#bbbbbb;letter-spacing:-1.167px;">VC<u>S</u></span>
<span style="left:510.36px;top:39.5px;height:20px;line-height:20px;font-size:12.5px;color:#bbbbbb;letter-spacing:0.582px;"><u>W</u>indow</span>
<span style="left:568.82px;top:39.5px;height:20px;line-height:20px;font-size:12.5px;color:#bbbbbb;letter-spacing:0.805px;"><u>H</u>elp</span>
<span style="left:623.92px;top:39.0px;height:20px;line-height:20px;font-size:12.5px;color:#787c7f;letter-spacing:0.381px;">MyApplication - Index.ets [entry]</span>
<span style="left:47.38px;top:68.0px;height:20px;line-height:20px;font-size:12.5px;color:#bbbbbb;font-weight:bold;letter-spacing:0.434px;">MyApplication</span>
<span style="left:151.08px;top:68.0px;height:20px;line-height:20px;font-size:12.5px;color:#bbbbbb;font-weight:bold;letter-spacing:0.575px;">entry</span>
<span style="left:197.30px;top:68.0px;height:20px;line-height:20px;font-size:12.5px;color:#bbbbbb;letter-spacing:0.390px;">src</span>
<span style="left:227.97px;top:68.0px;height:20px;line-height:20px;font-size:12.5px;color:#bbbbbb;letter-spacing:0.544px;">main</span>
<span style="left:270.21px;top:68.0px;height:20px;line-height:20px;font-size:12.5px;color:#bbbbbb;letter-spacing:0.233px;">ets</span>
<span style="left:301.39px;top:68.0px;height:20px;line-height:20px;font-size:12.5px;color:#bbbbbb;letter-spacing:0.512px;">pages</span>
<span style="left:366.58px;top:68.0px;height:20px;line-height:20px;font-size:12.5px;color:#bbbbbb;letter-spacing:0.288px;">Index.ets</span>
<span style="left:1517.31px;top:68.5px;height:20px;line-height:20px;font-size:12.5px;color:#bbbbbb;letter-spacing:0.385px;">entry</span>
<span style="left:1590.22px;top:68.5px;height:20px;line-height:20px;font-size:12.5px;color:#bbbbbb;letter-spacing:0.280px;">No Devices</span>
<span style="left:89.02px;top:96.5px;height:20px;line-height:20px;font-size:12.5px;color:#bbbbbb;letter-spacing:0.308px;">Project</span>
<span style="left:100.48px;top:120.5px;height:20px;line-height:20px;font-size:12.5px;color:#d5d7d8;font-weight:bold;letter-spacing:0.425px;">MyApplication</span>
<div style="left:196px;top:120px;width:206px;height:20px;overflow:hidden">
<span style="left:0.32px;top:0.5px;height:20px;line-height:20px;font-size:12.5px;color:#7f8b91;letter-spacing:0.296px;">C:\Users\octop\DevEcoStudioProjects</span>
</div>
<span style="left:100.22px;top:140.5px;height:20px;line-height:20px;font-size:12.5px;color:#bbbbbb;letter-spacing:0.193px;">External Libraries</span>
<span style="left:100.44px;top:160.5px;height:20px;line-height:20px;font-size:12.5px;color:#bbbbbb;letter-spacing:0.121px;">Scratches and Consoles</span>
<span style="left:432.02px;top:96.5px;height:20px;line-height:20px;font-size:12.5px;color:#bbbbbb;letter-spacing:0.171px;">EntryAbility.ets</span>
<span style="left:566.68px;top:96.5px;height:20px;line-height:20px;font-size:12.5px;color:#bbbbbb;letter-spacing:0.263px;">Index.ets</span>
<span style="left:670.36px;top:96.5px;height:20px;line-height:20px;font-size:12.5px;color:#bbbbbb;letter-spacing:0.215px;">What's New in DevEco Studio</span>
<span style="left:412.88px;top:680.0px;height:20px;line-height:20px;font-size:12.5px;color:#bbbbbb;letter-spacing:0.559px;">Index</span>
<span style="left:469.19px;top:680.0px;height:20px;line-height:20px;font-size:12.5px;color:#bbbbbb;letter-spacing:0.511px;">build()</span>
<span style="left:529.82px;top:680.0px;height:20px;line-height:20px;font-size:12.5px;color:#bbbbbb;letter-spacing:0.135px;">RelativeContainer</span>
<span style="left:655.31px;top:680.0px;height:20px;line-height:20px;font-size:12.5px;color:#bbbbbb;letter-spacing:0.228px;">center</span>
<span style="left:715.20px;top:680.0px;height:20px;line-height:20px;font-size:12.5px;color:#bbbbbb;letter-spacing:0.568px;">align</span>
<span style="left:1359.52px;top:96.5px;height:20px;line-height:20px;font-size:12.5px;color:#bbbbbb;letter-spacing:0.179px;">Previewer</span>
<span style="left:1369.94px;top:125.8px;height:20px;line-height:20px;font-size:14.5px;color:#ffffff;letter-spacing:0.092px;">entry : /pages/Index</span>
<span style="left:1589.02px;top:182.8px;height:20px;line-height:20px;font-size:14.3px;color:#ffffff;letter-spacing:0.239px;">Phone (medium)</span>
<span style="left:1570.92px;top:446.5px;height:36px;line-height:36px;font-size:27px;color:#28323f;font-weight:bold;letter-spacing:-0.453px;">Hello World</span>
<span style="left:1914.74px;top:126.3px;height:20px;line-height:20px;font-size:15.5px;color:#9c9fa4;font-weight:bold;transform:scaleX(0.5859);transform-origin:0 50%;">1:1</span>
<span style="left:63.22px;top:706.0px;height:20px;line-height:20px;font-size:12.5px;color:#bbbbbb;letter-spacing:0.476px;">Build:</span>
<span style="left:114.14px;top:706.0px;height:20px;line-height:20px;font-size:12.5px;color:#bbbbbb;letter-spacing:-0.321px;">Sync</span>
<span style="left:178.02px;top:706.0px;height:20px;line-height:20px;font-size:12.5px;color:#bbbbbb;letter-spacing:0.440px;">Build Output</span>
<span style="left:107.18px;top:730.0px;height:20px;line-height:20px;font-size:12.5px;color:#d5d7d8;font-weight:bold;letter-spacing:0.315px;">MyApplication [PreviewBuild]:</span>
<span style="left:298.70px;top:730.0px;height:20px;line-height:20px;font-size:12.5px;color:#c5c8cc;letter-spacing:0.163px;">successful At 2025/2/17 10:31</span>
<span style="left:86.50px;top:1034.0px;height:20px;line-height:20px;font-size:11.8px;color:#bbbbbb;letter-spacing:0.043px;">Version Control</span>
<span style="left:206.23px;top:1034.0px;height:20px;line-height:20px;font-size:11.8px;color:#bbbbbb;letter-spacing:-0.452px;">TODO</span>
<span style="left:274.55px;top:1034.0px;height:20px;line-height:20px;font-size:11.8px;color:#bbbbbb;letter-spacing:0.065px;">Problems</span>
<span style="left:362.13px;top:1034.0px;height:20px;line-height:20px;font-size:11.8px;color:#bbbbbb;letter-spacing:0.167px;">Terminal</span>
<span style="left:443.84px;top:1034.0px;height:20px;line-height:20px;font-size:11.8px;color:#bbbbbb;letter-spacing:0.712px;">Log</span>
<span style="left:505.77px;top:1034.0px;height:20px;line-height:20px;font-size:11.8px;color:#bbbbbb;letter-spacing:0.094px;">Operation Analyzer</span>
<span style="left:649.75px;top:1034.0px;height:20px;line-height:20px;font-size:11.8px;color:#bbbbbb;letter-spacing:0.217px;">Profiler</span>
<span style="left:726.94px;top:1034.0px;height:20px;line-height:20px;font-size:11.8px;color:#bbbbbb;letter-spacing:-0.026px;">Code Linter</span>
<span style="left:824.82px;top:1034.0px;height:20px;line-height:20px;font-size:11.8px;color:#bbbbbb;letter-spacing:-0.289px;">Services</span>
<span style="left:902.75px;top:1034.0px;height:20px;line-height:20px;font-size:11.8px;color:#ffffff;letter-spacing:0.527px;">Build</span>
<span style="left:970.32px;top:1034.0px;height:20px;line-height:20px;font-size:11.8px;color:#bbbbbb;letter-spacing:0.032px;">ArkUI Inspector</span>
<span style="left:1090.95px;top:1034.0px;height:20px;line-height:20px;font-size:11.8px;color:#bbbbbb;letter-spacing:-0.011px;">PreviewerLog</span>
<span style="left:73.94px;top:1055.0px;height:20px;line-height:20px;font-size:12.5px;color:#bbbbbb;letter-spacing:0.280px;">Sync project finished in 3 m 34 s 597 ms (3 minutes ago)</span>
<span style="left:1756.12px;top:1055.0px;height:20px;line-height:20px;font-size:12px;color:#a0a4a8;letter-spacing:-0.320px;">13:51</span>
<span style="left:1798.84px;top:1055.0px;height:20px;line-height:20px;font-size:10.8px;color:#a0a4a8;letter-spacing:-0.933px;">LF</span>
<span style="left:1823.52px;top:1055.0px;height:20px;line-height:20px;font-size:12px;color:#a0a4a8;letter-spacing:-0.195px;">UTF-8</span>
<span style="left:1868.55px;top:1055.0px;height:20px;line-height:20px;font-size:12px;color:#a0a4a8;letter-spacing:0.349px;">2 spaces</span>
<span style="left:19.6px;width:55.8px;text-align:center;top:111.9px;height:16px;line-height:16px;font-size:11.7px;color:#e6e6e6;transform:rotate(-90deg);transform-origin:50% 50%;letter-spacing:0.039px;">Project</span>
<span style="left:13.5px;width:67.5px;text-align:center;top:873.0px;height:16px;line-height:16px;font-size:11.7px;color:#bbbbbb;transform:rotate(-90deg);transform-origin:50% 50%;letter-spacing:0.133px;">Structure</span>
<span style="left:8.8px;width:77.0px;text-align:center;top:964.0px;height:16px;line-height:16px;font-size:11.7px;color:#bbbbbb;transform:rotate(-90deg);transform-origin:50% 50%;letter-spacing:0.002px;">Bookmarks</span>
<span style="left:1899.1px;width:88.3px;text-align:center;top:146.9px;height:16px;line-height:16px;font-size:11.7px;color:#bbbbbb;transform:rotate(90deg);transform-origin:50% 50%;letter-spacing:0.489px;">Notifications</span>
<span style="left:1899.6px;width:87.3px;text-align:center;top:258.0px;height:16px;line-height:16px;font-size:11.7px;color:#bbbbbb;transform:rotate(90deg);transform-origin:50% 50%;letter-spacing:0.125px;">AppAnalyzer</span>
<span style="left:1904.8px;width:77.0px;text-align:center;top:363.2px;height:16px;line-height:16px;font-size:11.7px;color:#bbbbbb;transform:rotate(90deg);transform-origin:50% 50%;letter-spacing:-0.155px;">CodeGenie</span>
<span style="left:1883.5px;width:119.6px;text-align:center;top:485.2px;height:16px;line-height:16px;font-size:11.7px;color:#bbbbbb;transform:rotate(90deg);transform-origin:50% 50%;letter-spacing:0.219px;">ObfuscationHelper</span>
<span style="left:1908.7px;width:69.3px;text-align:center;top:601.8px;height:16px;line-height:16px;font-size:11.7px;color:#ffffff;transform:rotate(90deg);transform-origin:50% 50%;letter-spacing:-0.186px;">Previewer</span>
<span style="left:1883.7px;width:119.2px;text-align:center;top:959.4px;height:16px;line-height:16px;font-size:11.7px;color:#bbbbbb;transform:rotate(90deg);transform-origin:50% 50%;letter-spacing:-0.199px;">Device File Browser</span>
<span style="left:1726px;top:1056.1px;height:40px;line-height:40px;font-size:35.5px;letter-spacing:-.1px;font-family:&quot;Liberation Sans&quot;,&quot;Noto Sans CJK SC&quot;,sans-serif;color:rgba(255,255,255,.66);-webkit-text-stroke:1px rgba(100,100,100,.5);paint-order:stroke fill;">CSDN @</span>
<span style="left:1869.5px;top:1052.5px;height:44px;line-height:44px;font-size:38.6px;font-family:&quot;Liberation Sans&quot;,&quot;Noto Sans CJK SC&quot;,sans-serif;color:rgba(255,255,255,.66);-webkit-text-stroke:1px rgba(100,100,100,.5);paint-order:stroke fill;">韩曙亮</span>
<div style="left:827px;top:385px;width:40px;height:20px;background:#344134;"></div>
<div style="left:481px;top:252px;width:1px;height:330px;background:#3a3a3a;"></div>
<div style="left:497px;top:274px;width:1px;height:242px;background:#3a3a3a;"></div>
<div style="left:513px;top:296px;width:1px;height:220px;background:#3a3a3a;"></div>
<div style="left:529px;top:384px;width:1px;height:44px;background:#3a3a3a;"></div>
<div style="left:529px;top:472px;width:1px;height:22px;background:#3a3a3a;"></div>
<pre class="n" style="left:393px;top:120.5px;color:#606366">1</pre>
<pre style="left:467px;top:120.5px"><i class="a">@Entry</i></pre>
<pre class="n" style="left:393px;top:142.5px;color:#606366">2</pre>
<pre style="left:467px;top:142.5px"><i class="a">@Component</i></pre>
<pre class="n" style="left:393px;top:164.5px;color:#606366">3</pre>
<pre style="left:467px;top:164.5px"><i class="k">struct</i> <i class="t">Index</i> <i class="o">{</i></pre>
<pre class="n" style="left:393px;top:186.5px;color:#606366">4</pre>
<pre style="left:483px;top:186.5px"><i class="a">@State</i> <i class="w">message</i><i class="c">:</i> <i class="c">string</i> <i class="y">=</i> <i class="y">'</i><i class="s">Hello World</i><i class="y">'</i><i class="y">;</i></pre>
<pre class="n" style="left:393px;top:208.5px;color:#606366">5</pre>
<pre class="n" style="left:393px;top:230.5px;color:#606366">6</pre>
<pre style="left:483px;top:230.5px"><i class="f">build</i><i class="p">()</i> <i class="o">{</i></pre>
<pre class="n" style="left:393px;top:252.5px;color:#606366">7</pre>
<pre style="left:499px;top:252.5px"><i class="f">RelativeContainer</i><i class="p">()</i> <i class="o">{</i></pre>
<pre class="n" style="left:393px;top:274.5px;color:#606366">8</pre>
<pre style="left:515px;top:274.5px"><i class="f">Text</i><i class="p">(</i><i class="k">this</i><i class="y">.</i><i class="w">message</i><i class="p">)</i></pre>
<pre class="n" style="left:393px;top:296.5px;color:#606366">9</pre>
<pre style="left:531px;top:296.5px"><i class="y">.</i><i class="f">id</i><i class="p">(</i><i class="y">'</i><i class="s">HelloWorld</i><i class="y">'</i><i class="p">)</i></pre>
<pre class="n" style="left:393px;top:318.5px;color:#606366">10</pre>
<pre style="left:531px;top:318.5px"><i class="y">.</i><i class="f">fontSize</i><i class="p">(</i><i class="f">$r</i><i class="p">(</i><i class="y">'</i><i class="s">app.float.page_text_font_size</i><i class="y">'</i><i class="p">))</i></pre>
<pre class="n" style="left:393px;top:340.5px;color:#606366">11</pre>
<pre style="left:531px;top:340.5px"><i class="y">.</i><i class="f">fontWeight</i><i class="p">(</i><i class="w">FontWeight</i><i class="y">.</i><i class="w">Bold</i><i class="p">)</i></pre>
<pre class="n" style="left:393px;top:362.5px;color:#606366">12</pre>
<pre style="left:531px;top:362.5px"><i class="y">.</i><i class="f">alignRules</i><i class="p">(</i><i class="o">{</i></pre>
<pre class="n" style="left:393px;top:384.5px;color:#a4a3a3">13</pre>
<pre style="left:547px;top:384.5px"><i class="w">center</i><i class="y">:</i> <i class="o">{</i> <i class="w">anchor</i><i class="y">:</i> <i class="y">'</i><i class="s">__container__</i><i class="y">'</i><i class="y">,</i> <i class="w">align</i><i class="y">:</i> <i class="w">VerticalAlign</i><i class="y">.</i><i class="w">Center</i> <i class="o">}</i><i class="y">,</i></pre>
<pre class="n" style="left:393px;top:406.5px;color:#606366">14</pre>
<pre style="left:547px;top:406.5px"><i class="w">middle</i><i class="y">:</i> <i class="o">{</i> <i class="w">anchor</i><i class="y">:</i> <i class="y">'</i><i class="s">__container__</i><i class="y">'</i><i class="y">,</i> <i class="w">align</i><i class="y">:</i> <i class="w">HorizontalAlign</i><i class="y">.</i><i class="w">Center</i> <i class="o">}</i></pre>
<pre class="n" style="left:393px;top:428.5px;color:#606366">15</pre>
<pre style="left:531px;top:428.5px"><i class="o">}</i><i class="p">)</i></pre>
<pre class="n" style="left:393px;top:450.5px;color:#606366">16</pre>
<pre style="left:531px;top:450.5px"><i class="y">.</i><i class="f">onClick</i><i class="p">(()</i> <i class="y">=&gt;</i> <i class="o">{</i></pre>
<pre class="n" style="left:393px;top:472.5px;color:#606366">17</pre>
<pre style="left:547px;top:472.5px"><i class="k">this</i><i class="y">.</i><i class="w">message</i> <i class="y">=</i> <i class="y">'</i><i class="s">Welcome</i><i class="y">'</i><i class="y">;</i></pre>
<pre class="n" style="left:393px;top:494.5px;color:#606366">18</pre>
<pre style="left:531px;top:494.5px"><i class="o">}</i><i class="p">)</i></pre>
<pre class="n" style="left:393px;top:516.5px;color:#606366">19</pre>
<pre style="left:499px;top:516.5px"><i class="o">}</i></pre>
<pre class="n" style="left:393px;top:538.5px;color:#606366">20</pre>
<pre style="left:499px;top:538.5px"><i class="y">.</i><i class="f">height</i><i class="p">(</i><i class="y">'</i><i class="s">100%</i><i class="y">'</i><i class="p">)</i></pre>
<pre class="n" style="left:393px;top:560.5px;color:#606366">21</pre>
<pre style="left:499px;top:560.5px"><i class="y">.</i><i class="f">width</i><i class="p">(</i><i class="y">'</i><i class="s">100%</i><i class="y">'</i><i class="p">)</i></pre>
<pre class="n" style="left:393px;top:582.5px;color:#606366">22</pre>
<pre style="left:483px;top:582.5px"><i class="o">}</i></pre>
<pre class="n" style="left:393px;top:604.5px;color:#606366">23</pre>
<pre style="left:467px;top:604.5px"><i class="o">}</i></pre>
<pre style="left:560px;top:731.5px"><i class="l">&gt; hvigor </i><i class="g">Finished :entry:default@PreviewHookCompileResource... after 1 ms</i></pre>
<pre style="left:560px;top:753.5px"><i class="l">&gt; hvigor </i><i class="g">UP-TO-DATE :entry:default@CopyPreviewProfile...</i></pre>
<pre style="left:560px;top:775.5px"><i class="l">&gt; hvigor </i><i class="g">Finished :entry:default@ReplacePreviewerPage... after 1 ms</i></pre>
<pre style="left:560px;top:797.5px"><i class="l">&gt; hvigor </i><i class="g">Finished :entry:buildPreviewerResource... after 1 ms</i></pre>
<pre style="left:560px;top:819.5px"><i class="l">&gt; hvigor </i><i class="g">UP-TO-DATE :entry:default@PreviewUpdateAssets...</i></pre>
<pre style="left:560px;top:841.5px"><i class="l">&gt; hvigor </i><i class="g">Finished :entry:default@PreviewArkTS... after 9 s 787 ms</i></pre>
<pre style="left:560px;top:863.5px"><i class="l">&gt; hvigor </i><i class="g">Finished :entry:PreviewBuild... after 1 ms</i></pre>
<pre style="left:560px;top:885.5px"><i class="l">&gt; hvigor </i><i class="g">BUILD SUCCESSFUL in 10 s 103 ms</i></pre>
<pre style="left:560px;top:929.5px"><i class="l">Process finished with exit code 0</i></pre>
<pre style="left:560px;top:973.5px"><i class="u">Build Analyzer</i><i class="l"> results available</i></pre>
<svg style="left:474px;top:386px;" width="15" height="18" viewBox="0 0 15 18">
<path d="M7.100 1.700a5.100 5.100 0 0 1 3.300 9c-.5 .5-.7 .9-.7 1.500H4.500c0-.6-.2-1-.7-1.500a5.100 5.100 0 0 1 3.300-9z" fill="#f0a732"/>
<path d="M4.300 13.600h5.700M4.900 15.600h4.500" stroke="#d4d4d4" stroke-width="1.100"/>
</svg>
</body></html>
